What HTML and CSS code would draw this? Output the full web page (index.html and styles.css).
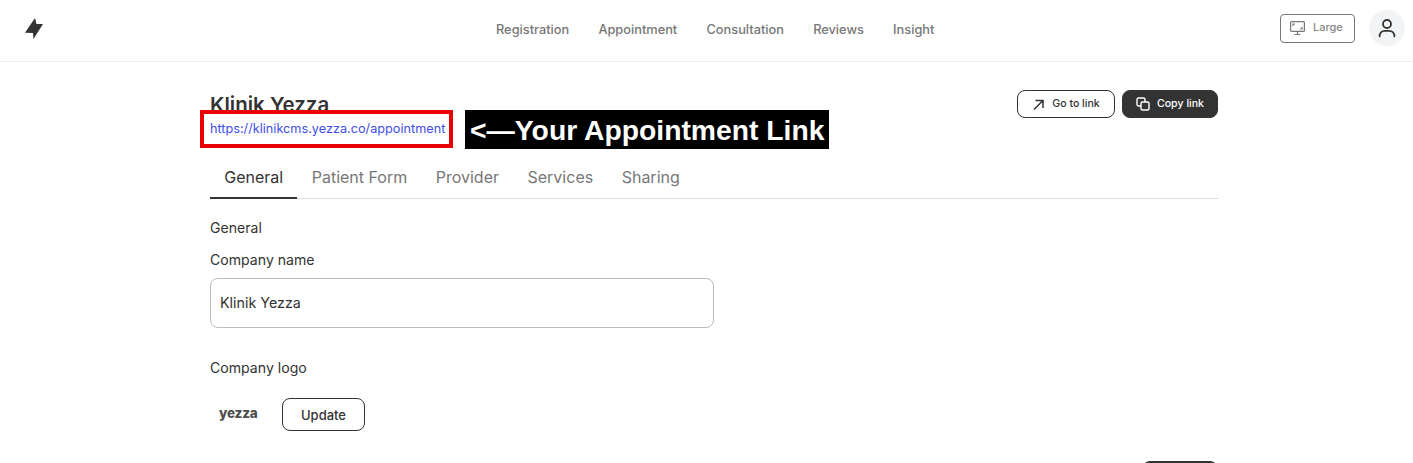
FILE: index.html
```html
<!DOCTYPE html>
<html lang="en">
<head>
<meta charset="utf-8">
<title>Appointment</title>
<link rel="stylesheet" href="styles.css">
</head>
<body>
<header class="topbar">
  <svg class="logo" width="20" height="22" viewBox="0 0 20 22"><path d="M11 0 L12.5 6 L19 6 L9.5 21 L9 15 L1 14.7 Z" fill="#333"/></svg>
  <nav class="nav">
    <a>Registration</a><a>Appointment</a><a>Consultation</a><a>Reviews</a><a>Insight</a>
  </nav>
  <div class="top-actions">
    <button class="size-btn">
      <svg width="15" height="15" viewBox="0 0 15 15" fill="none" stroke="#777" stroke-width="1.2"><rect x="0.6" y="0.6" width="13.8" height="9.8" rx="1"/><path d="M3 5V3H5M12 6V8H10M7.5 10.5V13M4.5 13.5H10.5"/></svg>
      <span>Large</span>
    </button>
    <div class="avatar">
      <svg width="20" height="20" viewBox="0 0 20 20" fill="none" stroke="#333" stroke-width="1.8" stroke-linecap="round"><circle cx="10" cy="6" r="4"/><path d="M2.6 18.3c0-3.6 2.6-5.4 5.2-5.4h4.4c2.6 0 5.2 1.8 5.2 5.4"/></svg>
    </div>
  </div>
</header>
<main class="content">
  <div class="title-row">
    <div class="title-block">
      <h1>Klinik Yezza</h1>
      <a class="link">https://klinikcms.yezza.co/appointment</a>
    </div>
    <div class="title-actions">
      <button class="btn outline small">
        <svg width="13" height="13" viewBox="0 0 13 13" fill="none" stroke="#333" stroke-width="1.5"><path d="M2 11.5 L11 2.5M3.5 2.5H11V10"/></svg>
        <span class="btn-label">Go to link</span>
      </button>
      <button class="btn dark small">
        <svg width="14" height="14" viewBox="0 0 14 14" fill="none" stroke="#fff" stroke-width="1.4"><rect x="1" y="1" width="8" height="8" rx="1.5"/><rect x="5" y="5" width="8" height="8" rx="1.5" fill="#333"/></svg>
        <span class="btn-label">Copy link</span>
      </button>
    </div>
  </div>
  <div class="tabs">
    <a class="tab active">General</a><a class="tab">Patient Form</a><a class="tab">Provider</a><a class="tab">Services</a><a class="tab">Sharing</a>
  </div>
  <p class="section">General</p>
  <label class="label" for="company">Company name</label>
  <input class="field" id="company" value="Klinik Yezza">
  <p class="label logo-label">Company logo</p>
  <div class="logo-row">
    <span class="brand">yezza</span>
    <button class="btn outline update">Update</button>
  </div>
  <div class="save-row"><button class="btn dark save" aria-label="Save"></button></div>
</main>
<div class="callout-box"></div>
<div class="callout-text">&lt;—Your Appointment Link</div>
</body>
</html>
```
FILE: styles.css
```css
* { box-sizing: border-box; }
html, body { height: 100%; overflow: hidden; }
body {
  margin: 0;
  background: #fff;
  color: #333;
  font-family: Inter, "Liberation Sans", sans-serif;
  position: relative;
}
.topbar {
  height: 62px;
  border-bottom: 1px solid #eee;
  display: flex;
  align-items: center;
  position: relative;
  padding: 0 8px 0 24px;
}
.logo { flex: none; margin-top: -3px; }
.nav {
  position: absolute;
  left: 496px;
  top: 22px;
  display: flex;
  gap: 29.2px;
  font-size: 12.8px;
  font-weight: 500;
  line-height: 16px;
  color: #777;
}
.top-actions {
  margin-left: auto;
  display: flex;
  align-items: center;
  gap: 14px;
  margin-top: -5px;
}
.size-btn {
  width: 75px;
  height: 29px;
  border: 1px solid #777;
  border-radius: 4px;
  background: #fff;
  display: flex;
  align-items: center;
  gap: 8px;
  padding: 0 0 0 9px;
  font: 500 11px Inter, sans-serif;
  color: #888;
}
.size-btn span { margin-top: -2px; }
.avatar {
  width: 36px;
  height: 36px;
  border-radius: 50%;
  background: #f3f4f6;
  display: flex;
  align-items: center;
  justify-content: center;
}
.content {
  width: 1008px;
  margin-left: 210px;
}
.title-row {
  display: flex;
  justify-content: space-between;
  padding-top: 28px;
  height: 102px;
}
h1 {
  margin: 0;
  font-size: 20.5px;
  font-weight: 600;
  line-height: 30px;
}
.link {
  display: block;
  font-size: 12.7px;
  line-height: 18px;
  color: #3f4ee8;
}
.title-actions { display: flex; gap: 7px; align-items: flex-start; }
.btn {
  font-family: Inter, sans-serif;
  font-weight: 500;
  border-radius: 8px;
  display: flex;
  align-items: center;
  justify-content: center;
}
.small { height: 28px; font-size: 10.6px; gap: 7px; }
.btn-label { margin-top: -2px; }
.title-actions .outline { width: 98px; }
.title-actions .dark { width: 96px; }
.outline { background: #fff; border: 1px solid #333; color: #333; }
.dark { background: #333; border: 1px solid #333; color: #fff; }
.tabs {
  display: flex;
  height: 36px;
  border-bottom: 1px solid #ddd;
  margin-top: -1px;
  font-size: 16px;
  line-height: 22px;
  color: #777;
}
.tab { padding: 3px 14.25px 0; height: 36px; }
.active { color: #333; border-bottom: 2px solid #333; }
.section {
  margin: 19px 0 0;
  font-size: 14.1px;
  line-height: 20px;
}
.label {
  display: block;
  margin-top: 12px;
  font-size: 14.1px;
  line-height: 20px;
}
.field {
  display: block;
  width: 504px;
  height: 50px;
  margin-top: 8px;
  border: 1px solid #bbb;
  border-radius: 8px;
  padding: 0 9px 2px;
  font: 400 14.3px Inter, sans-serif;
  color: #333;
  outline: none;
}
.logo-label { margin: 30px 0 0; }
.logo-row {
  display: flex;
  align-items: center;
  margin-top: 20px;
  height: 33px;
}
.brand {
  width: 72px;
  padding-left: 9px;
  font-size: 13.5px;
  font-weight: 800;
  letter-spacing: -0.2px;
  color: #4d4d4d;
  margin-top: -4px;
}
.update { width: 83px; height: 33px; font-size: 13px; }
.save-row {
  display: flex;
  justify-content: flex-end;
  margin-top: 30px;
}
.save { width: 76px; height: 34px; }
.callout-box {
  position: absolute;
  left: 200px;
  top: 110px;
  width: 253px;
  height: 38px;
  border: 4px solid #e90000;
}
.callout-text {
  position: absolute;
  left: 465px;
  top: 110px;
  width: 364px;
  height: 39px;
  padding-left: 5px;
  background: #000;
  color: #fff;
  font: 700 28.3px/40px "Liberation Sans", sans-serif;
  white-space: nowrap;
}
```
